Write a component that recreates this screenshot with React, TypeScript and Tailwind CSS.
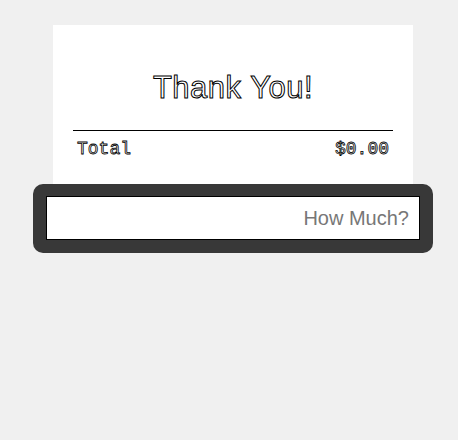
const outline = "text-white [-webkit-text-stroke:1px_#000]";

export default function App() {
  return (
    <div className="min-h-screen bg-[#f0f0f0] pt-[25px] pl-[33px]">
      {/* Receipt */}
      <div className="ml-[20px] w-[360px] h-[160px] bg-white px-[20px] pt-[45px]">
        <h1
          className={`text-center text-[31px] leading-[36px] tracking-[0.5px] font-['Liberation_Sans',Arial,sans-serif] ${outline}`}
        >
          Thank You!
        </h1>
        <div className="mt-[24px] border-t border-black" />
        <div
          className={`flex justify-between px-[4px] pt-[6px] text-[18px] leading-[24px] font-['Liberation_Mono','Courier_New',monospace] text-white [-webkit-text-stroke:0.8px_#000]`}
        >
          <span>Total</span>
          <span>$0.00</span>
        </div>
      </div>

      {/* Amount entry */}
      <div className="-mt-px w-[400px] rounded-[10px] bg-[#383838] px-[13px] pt-[12px] pb-[13px]">
        <input
          type="text"
          placeholder="How Much?"
          className="block w-full h-[44px] bg-white border border-black px-[10px] text-right text-[20px] text-[#333] placeholder:text-[#777] font-['Liberation_Sans',Arial,sans-serif] outline-none"
        />
      </div>
    </div>
  );
}
